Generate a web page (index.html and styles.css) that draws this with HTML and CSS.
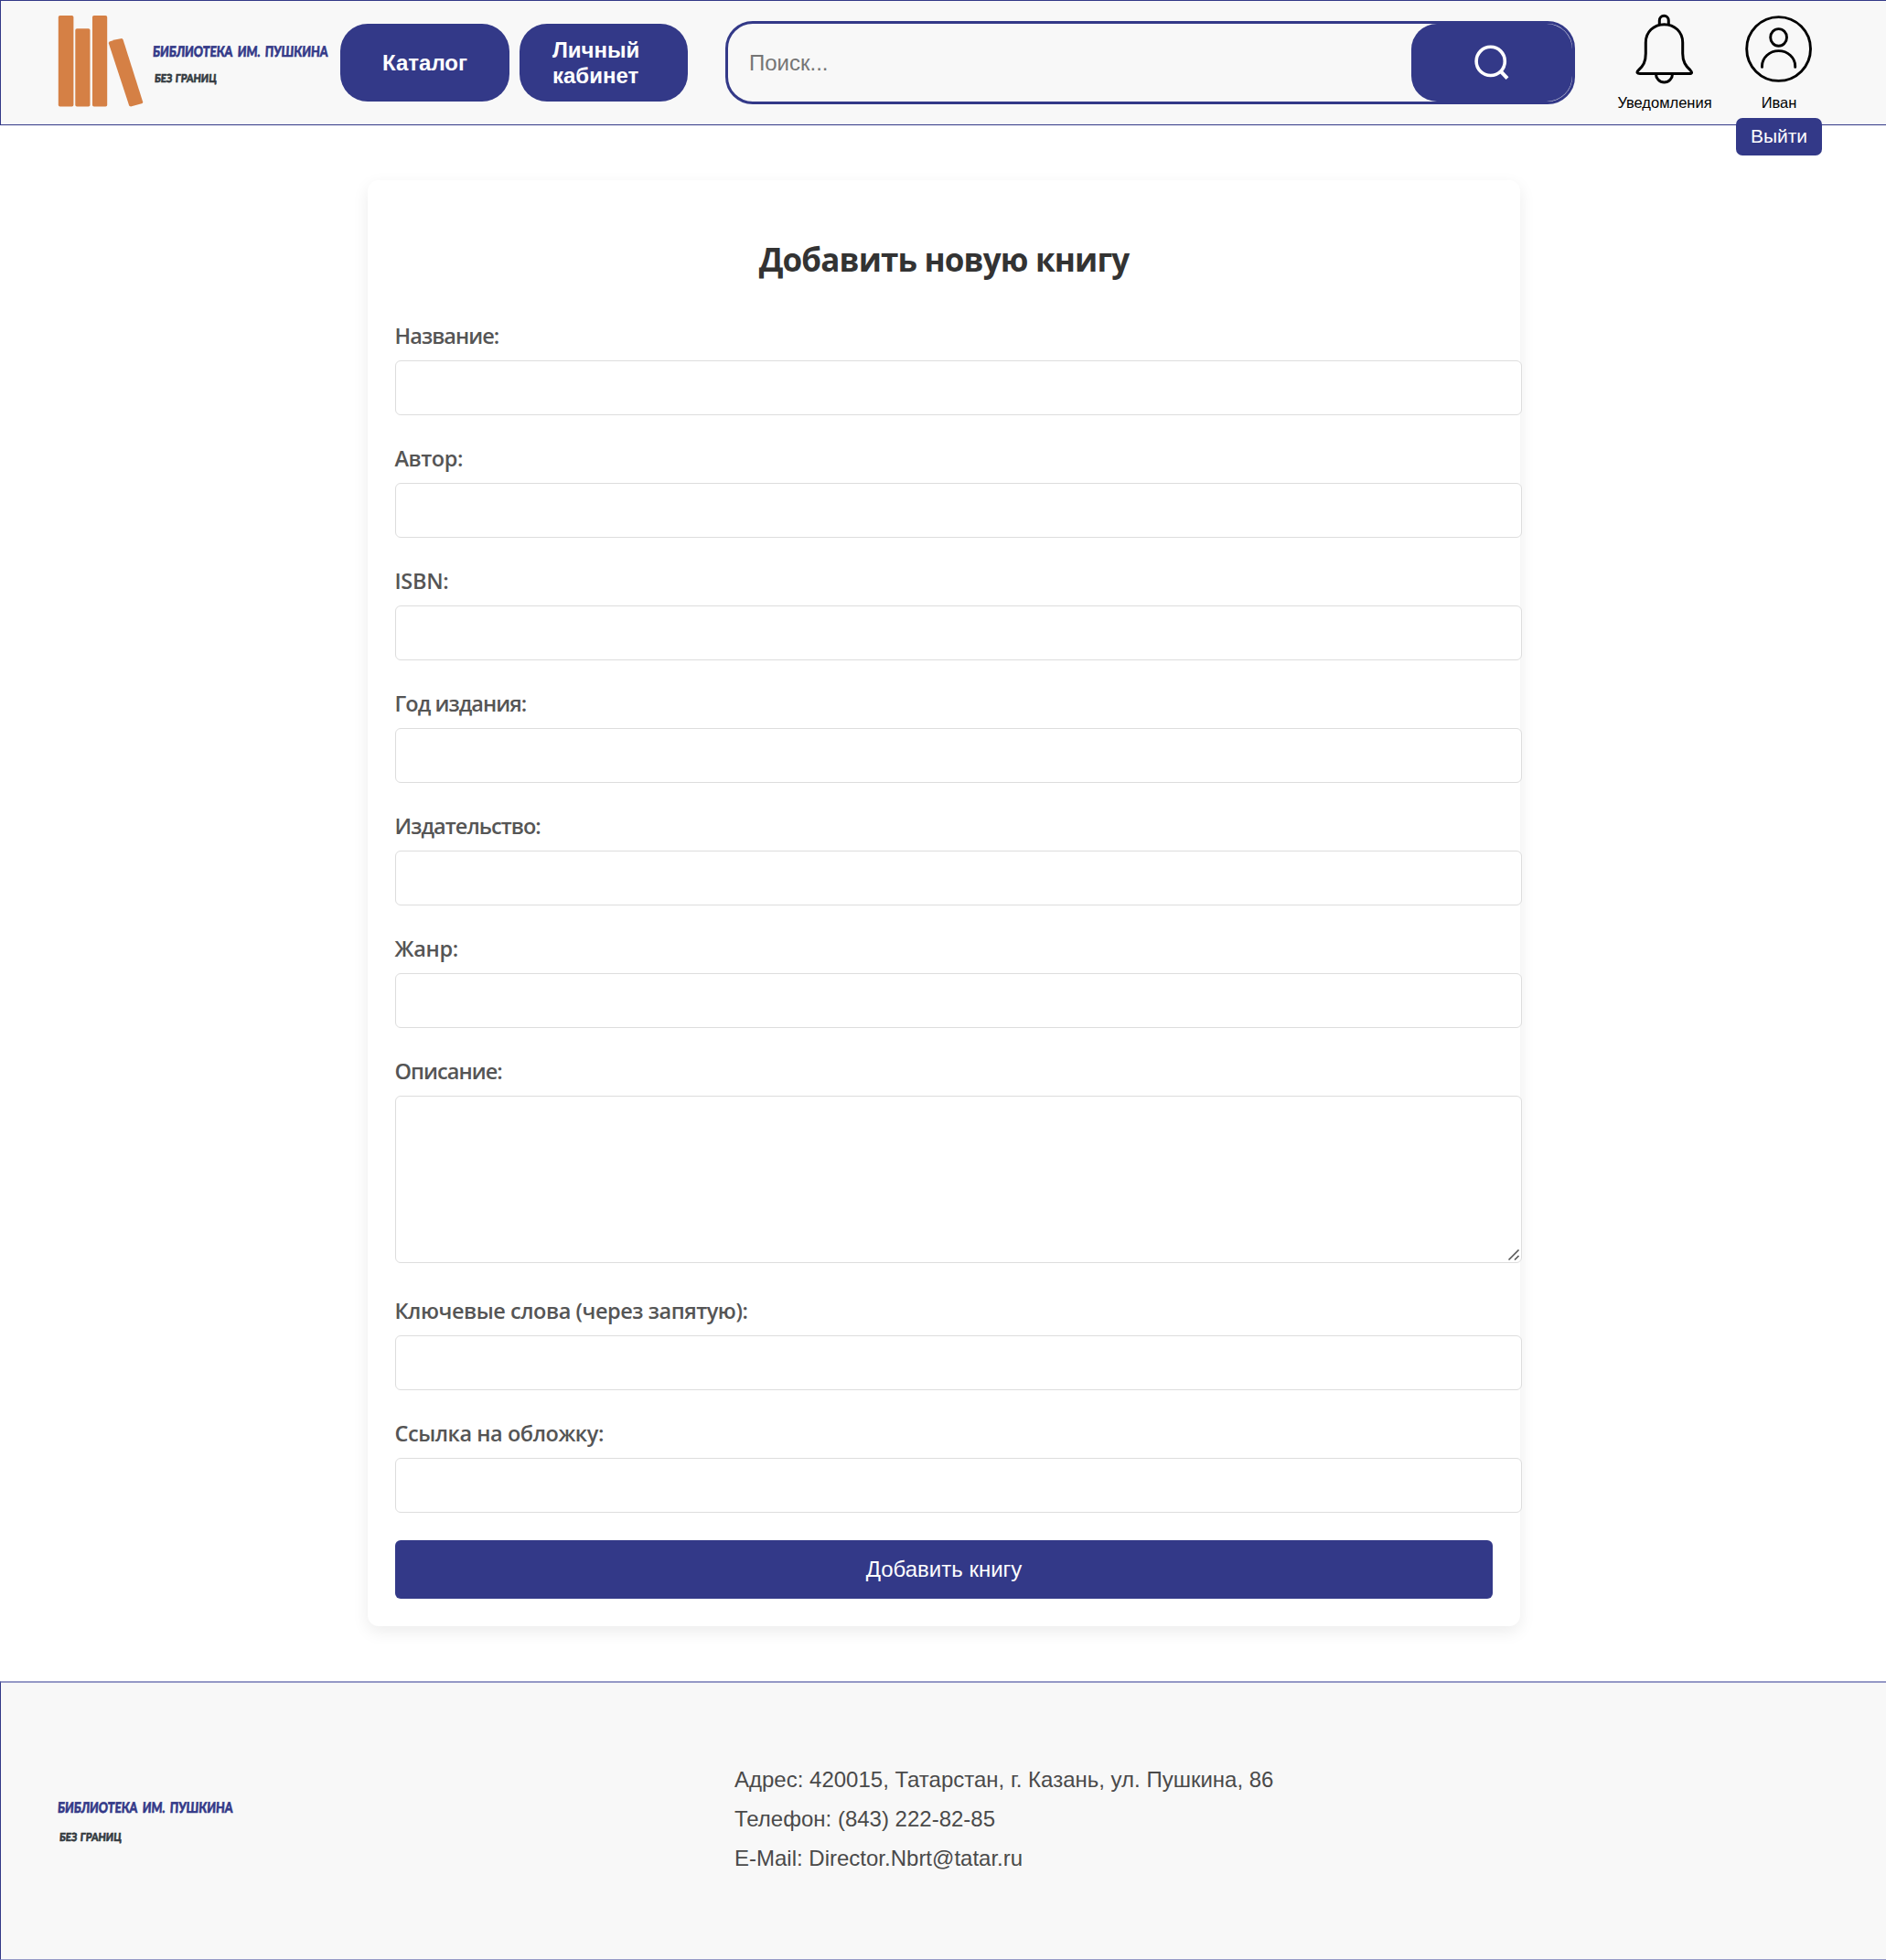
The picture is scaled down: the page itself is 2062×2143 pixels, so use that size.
FILE: index.html
```html
<!DOCTYPE html>
<html lang="ru">
<head>
<meta charset="utf-8">
<title>Добавить новую книгу</title>
<link rel="stylesheet" href="styles.css">
</head>
<body>
<header class="header">
  <a class="logo">
    <svg class="logo-books" width="94" height="100" viewBox="0 0 94 100" fill="#d58045">
      <rect x="-0.2" y="0" width="16.6" height="99.5" rx="1.8"/>
      <rect x="18.3" y="14.2" width="16.2" height="85.3" rx="1.8"/>
      <rect x="37" y="0" width="16.2" height="99.5" rx="1.8"/>
      <path d="M55.6 28.5Q62.8 25.8 69.4 25.1L70.6 26.5L92.2 94.5L91.7 96L79 99.4L77.3 98.8L54.7 30Z"/>
    </svg>
    <span class="brand">
      <span class="brand-name">БИБЛИОТЕКА ИМ. ПУШКИНА</span>
      <span class="brand-tag">БЕЗ ГРАНИЦ</span>
    </span>
  </a>
  <nav class="nav">
    <a class="nav-link">Каталог</a>
    <a class="nav-link"><span class="nav-two">Личный кабинет</span></a>
  </nav>
  <form class="search">
    <input class="search-input" type="text" placeholder="Поиск...">
    <button class="search-button" type="button">
      <svg width="40" height="42" viewBox="0 0 40 42" fill="none" stroke="#fff" stroke-width="3.6">
        <circle cx="18.7" cy="18.9" r="15.6"/>
        <path d="M29.6 29.8L37 37.6" stroke-width="4"/>
      </svg>
    </button>
  </form>
  <div class="actions">
    <div class="action action-bell">
      <svg width="64" height="78" viewBox="0 0.5 64 78" fill="none" stroke="#000" stroke-width="3">
        <path d="M26.3 12.5V8a5 5.2 0 0 1 10 0V12.5"/>
        <path d="M31.5 12.2C20 12.2 11.3 20.5 11.3 32V44C11.3 53.5 8.5 57.5 3.5 62.2C0.8 64.8 2 66 5 66H58.5C62 66 62.5 64.8 60 62.2C55 57.5 51.7 53 51.7 44V32C51.7 20.5 43 12.2 31.5 12.2Z"/>
        <path d="M22.4 66a9.1 9.6 0 0 0 18.2 0"/>
      </svg>
      <span class="action-label">Уведомления</span>
    </div>
    <div class="action action-user">
      <svg width="76" height="78" viewBox="0 0.8 76 78" fill="none" stroke="#000" stroke-width="2.9">
        <circle cx="37.6" cy="39.3" r="34.9"/>
        <ellipse cx="37.6" cy="26.7" rx="8.9" ry="9.3"/>
        <path d="M19.5 59.2V58a18.1 16.6 0 0 1 36.2 0V59.2" stroke-linecap="round"/>
      </svg>
      <span class="action-label">Иван</span>
      <button class="logout" type="button">Выйти</button>
    </div>
  </div>
</header>
<main class="main">
  <form class="card">
    <h1 class="title">Добавить новую книгу</h1>
    <div class="field"><label class="label label-tight">Название:</label><input class="input" type="text"></div>
    <div class="field"><label class="label">Автор:</label><input class="input" type="text"></div>
    <div class="field"><label class="label label-loose">ISBN:</label><input class="input" type="text"></div>
    <div class="field"><label class="label label-tight">Год издания:</label><input class="input" type="text"></div>
    <div class="field"><label class="label label-tight">Издательство:</label><input class="input" type="text"></div>
    <div class="field"><label class="label label-loose">Жанр:</label><input class="input" type="text"></div>
    <div class="field field-area">
      <label class="label label-tight">Описание:</label><textarea class="input area"></textarea>
      <svg class="grip" width="14" height="14" viewBox="0 0 14 14" stroke="#555" stroke-width="1.6"><path d="M1.5 12.5L12.5 1.5M8 12.5L12.5 8"/></svg>
    </div>
    <div class="field"><label class="label">Ключевые слова (через запятую):</label><input class="input" type="text"></div>
    <div class="field"><label class="label">Ссылка на обложку:</label><input class="input" type="text"></div>
    <button class="submit" type="button">Добавить книгу</button>
  </form>
</main>
<footer class="footer">
  <span class="brand brand-footer">
    <span class="brand-name">БИБЛИОТЕКА ИМ. ПУШКИНА</span>
    <span class="brand-tag">БЕЗ ГРАНИЦ</span>
  </span>
  <div class="contacts">
    <p>Адрес: 420015, Татарстан, г. Казань, ул. Пушкина, 86</p>
    <p>Телефон: (843) 222-82-85</p>
    <p>E-Mail: Director.Nbrt@tatar.ru</p>
  </div>
</footer>
</body>
</html>
```
FILE: styles.css
```css
* { box-sizing: border-box; }
body { margin: 0; background: #fff; font-family: "Liberation Sans", Arial, sans-serif; overflow-x: hidden; }
button, input, textarea { font-family: inherit; }
svg { display: block; flex: none; }

.header {
  display: flex;
  align-items: flex-start;
  height: 137px;
  background: #f8f8f8;
  border: 1px solid #333988;
  border-right: 0;
}
.logo { display: flex; width: 308px; margin: 16px 0 0 63px; }
.logo-books { overflow: visible; }
.brand {
  display: flex;
  flex-direction: column;
  align-items: flex-start;
  font-family: Lato, sans-serif;
  font-weight: 900;
  white-space: nowrap;
}
.logo .brand { width: 194px; margin: 29px 0 0 9px; }
.brand-name,
.brand-tag {
  line-height: 20px;
  transform-origin: 0 50%;
  -webkit-text-stroke: 0.6px currentColor;
}
.brand-name { font-size: 16px; word-spacing: 3px; transform: scaleX(0.788) skewX(-4deg); color: #333988; }
.brand-tag { margin: 10px 0 0 2px; font-size: 12.5px; word-spacing: 1px; transform: scaleX(0.865) skewX(-4deg); color: #333a40; }

.nav { display: flex; gap: 11px; margin-top: 25px; }
.nav-link {
  display: flex;
  align-items: center;
  justify-content: center;
  width: 185px;
  height: 85px;
  border-radius: 30px;
  background: #333988;
  color: #fff;
  font-size: 24px;
  font-weight: 700;
  line-height: 28px;
}
.nav-link + .nav-link { width: 184px; justify-content: flex-start; padding-left: 36px; }
.nav-two { width: 100px; }

.search {
  display: flex;
  width: 929px;
  height: 91px;
  margin: 22px 0 0 41px;
  border: 3px solid #333988;
  border-radius: 30px;
}
.search-input { flex: 1; min-width: 0; padding: 0 0 0 23px; border: 0; background: none; font-size: 24px; outline: 0; }
.search-input::placeholder { color: #757575; }
.search-button {
  display: flex;
  width: 176px;
  height: 85px;
  padding: 22px 0 0 68px;
  border: 0;
  border-radius: 28px;
  background: #333988;
}

.actions { display: flex; margin: 14px 0 0 46px; }
.action { display: flex; flex-direction: column; align-items: center; width: 104px; }
.action-user { margin-left: 21px; }
.action-label { margin-top: 9px; font-size: 16.5px; line-height: 20px; color: #000; white-space: nowrap; }
.logout {
  width: 94px;
  height: 41px;
  margin-top: 7px;
  padding: 0 0 2px;
  border: 0;
  border-radius: 7px;
  background: #333988;
  color: #fff;
  font-size: 21px;
  flex: none;
}

.main { padding: 60px 0; }
.card {
  width: 1260px;
  height: 1581px;
  margin: 0 auto 0 402px;
  padding: 62px 30px 0;
  border-radius: 12px;
  background: #fff;
  box-shadow: 0 6px 18px rgba(0, 0, 0, 0.08);
}
.title {
  margin: 0 0 30px;
  height: 50px;
  font: 700 35px/50px "Open Sans", "Noto Sans", sans-serif;
  letter-spacing: -0.85px;
  text-align: center;
  color: #333;
}
.field { height: 134px; position: relative; }
.label {
  display: block;
  height: 55px;
  padding-top: 11px;
  font: 600 23.5px/34px "Open Sans", "Noto Sans", sans-serif;
  letter-spacing: -0.45px;
  color: #555;
  text-indent: -0.5px;
}
.label-tight { letter-spacing: -0.95px; }
.label-loose { letter-spacing: -0.3px; }
.input {
  display: block;
  width: 1232px;
  height: 60px;
  border: 1px solid #ddd;
  border-radius: 6px;
  background: #fff;
  resize: none;
  outline: 0;
}
.field-area { height: 262px; }
.area { height: 183px; }
.grip { position: absolute; top: 222px; right: -30px; }
.submit {
  display: block;
  width: 100%;
  height: 64px;
  margin-top: 11px;
  border: 0;
  border-radius: 6px;
  background: #333988;
  color: #fff;
  font-size: 24px;
}

.footer {
  display: flex;
  height: 305px;
  background: #f8f8f8;
  border: solid #333988;
  border-width: 2px 0 1px 1px;
  border-top-color: #9599c6;
  border-bottom-color: #9599c6;
}
.brand-footer { width: 740px; margin: 126px 0 0 62px; }
.brand-footer .brand-tag { margin-top: 13px; }
.contacts { margin-top: 84px; color: #4a4a4a; font-size: 24px; line-height: 43px; }
.contacts p { margin: 0; }
```
